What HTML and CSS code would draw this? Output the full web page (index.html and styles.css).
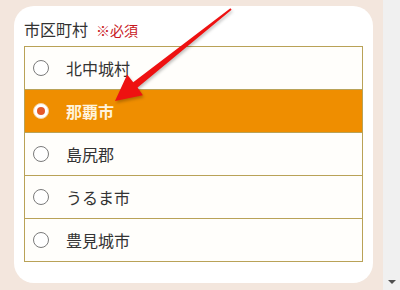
FILE: index.html
```html
<!DOCTYPE html>
<html lang="ja">
<head>
<meta charset="utf-8">
<link rel="stylesheet" href="styles.css">
</head>
<body>
<div class="page">
  <main class="viewport">
    <section class="card">
      <div class="label">市区町村<span class="req">※必須</span></div>
      <ul class="options">
        <li class="opt"><span class="radio"></span><span class="name">北中城村</span></li>
        <li class="opt selected"><span class="radio"><span class="dot"></span></span><span class="name">那覇市</span></li>
        <li class="opt"><span class="radio"></span><span class="name">島尻郡</span></li>
        <li class="opt"><span class="radio"></span><span class="name">うるま市</span></li>
        <li class="opt"><span class="radio"></span><span class="name">豊見城市</span></li>
      </ul>
    </section>
  </main>
  <div class="scrollbar"><span class="down"></span></div>
  <svg class="arrow" width="400" height="290" viewBox="0 0 400 290">
    <polygon points="231.6,9.8 137.6,87.6 142.9,95.3 115,101 127.2,74.6 133.2,82.2 230.4,8.2" fill="#ee1111"/>
  </svg>
</div>
</body>
</html>
```
FILE: styles.css
```css
* { box-sizing: border-box; }
html, body { margin: 0; padding: 0; }
body {
  width: 400px;
  height: 290px;
  overflow: hidden;
  font-family: "Noto Sans CJK JP", "Noto Sans", sans-serif;
  color: #333;
}
.page {
  position: relative;
  display: flex;
  width: 400px;
  height: 290px;
}
.viewport {
  width: 383px;
  height: 290px;
  background: #f3e6dd;
  padding: 6px 0 0 14px;
}
.card {
  width: 359px;
  height: 277px;
  background: #fff;
  border-radius: 20px;
  padding: 12px 0 0 10px;
}
.label {
  font-size: 16px;
  line-height: 22px;
  height: 22px;
  display: flex;
  align-items: baseline;
  margin-bottom: 6px;
}
.req {
  color: #c8161d;
  font-size: 14px;
  margin-left: 8px;
}
.options {
  list-style: none;
  margin: 0;
  padding: 0;
  width: 339px;
  border: 1px solid #b9a257;
}
.opt {
  height: 43px;
  display: flex;
  align-items: center;
  padding-left: 8px;
  font-size: 16px;
  border-top: 1px solid #b9a257;
  background: #fffefb;
}
.opt:first-child { border-top: none; height: 42px; }
.radio {
  width: 16px;
  height: 16px;
  border-radius: 50%;
  border: 1px solid #7a7a7a;
  background: #fff;
  display: flex;
  align-items: center;
  justify-content: center;
  flex: none;
}
.name {
  margin-left: 17px;
  line-height: 20px;
}
.opt.selected {
  background: #ef8e00;
  color: #fff3dc;
  font-weight: bold;
}
.opt.selected .radio {
  border-color: #f6d2a6;
}
.dot {
  width: 8px;
  height: 8px;
  border-radius: 50%;
  background: #e5592a;
}
.scrollbar {
  width: 17px;
  height: 290px;
  background: #f0f0f0;
  display: flex;
  align-items: flex-end;
  justify-content: center;
  padding-bottom: 6px;
}
.down {
  width: 0;
  height: 0;
  border-left: 4px solid transparent;
  border-right: 4px solid transparent;
  border-top: 4px solid #505050;
}
.arrow {
  position: absolute;
  left: 0;
  top: 0;
  filter: drop-shadow(1px 2px 1.5px rgba(0,0,0,0.25));
}
```
